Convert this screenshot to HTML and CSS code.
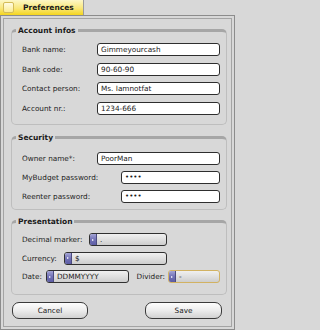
FILE: index.html
```html
<!DOCTYPE html>
<html>
<head>
<meta charset="utf-8">
<title>Preferences</title>
<link rel="stylesheet" href="styles.css">
</head>
<body>
<div class="window">
  <div class="tabbar">
    <div class="tab"><span class="tab-icon"></span><span class="tab-label">Preferences</span></div>
  </div>
  <div class="frame">
    <div class="frame-inner">
      <fieldset class="group group-account">
        <legend>Account infos</legend>
        <div class="rows">
          <div class="row"><span class="label">Bank name:</span><span class="field wide">Gimmeyourcash</span></div>
          <div class="row"><span class="label">Bank code:</span><span class="field wide">90-60-90</span></div>
          <div class="row"><span class="label">Contact person:</span><span class="field wide">Ms. Iamnotfat</span></div>
          <div class="row"><span class="label">Account nr.:</span><span class="field wide">1234-666</span></div>
        </div>
      </fieldset>
      <fieldset class="group group-security">
        <legend>Security</legend>
        <div class="rows">
          <div class="row"><span class="label">Owner name*:</span><span class="field wide">PoorMan</span></div>
          <div class="row"><span class="label">MyBudget password:</span><span class="field short dots">••••</span></div>
          <div class="row"><span class="label">Reenter password:</span><span class="field short dots">••••</span></div>
        </div>
      </fieldset>
      <fieldset class="group group-presentation">
        <legend>Presentation</legend>
        <div class="rows">
          <div class="row narrow"><span class="label">Decimal marker:</span><span class="combo combo-decimal"><span class="combo-btn"></span><span class="combo-text">.</span></span></div>
          <div class="row narrow"><span class="label">Currency:</span><span class="combo combo-currency"><span class="combo-btn"></span><span class="combo-text">$</span></span></div>
          <div class="row date-row">
            <span class="label">Date:</span>
            <span class="combo"><span class="combo-btn"></span><span class="combo-text">DDMMYYYY</span></span>
            <span class="label divider-label">Divider:</span>
            <span class="combo focused"><span class="combo-btn"></span><span class="combo-text">-</span></span>
          </div>
        </div>
      </fieldset>
      <div class="buttons">
        <div class="btn btn-cancel">Cancel</div>
        <div class="btn btn-save">Save</div>
      </div>
    </div>
  </div>
</div>
</body>
</html>
```

FILE: styles.css
```css
* { box-sizing: border-box; }
html, body { margin: 0; padding: 0; }
body {
  width: 238px;
  height: 330px;
  overflow: hidden;
  background: #d8d8d8;
  font-family: "DejaVu Sans", "Liberation Sans", sans-serif;
  font-size: 7.3px;
  color: #1e1e1e;
}

.tabbar { height: 15px; display: flex; }
.tab {
  width: 84px;
  height: 15px;
  display: flex;
  align-items: center;
  gap: 9px;
  padding-left: 3px;
  background: linear-gradient(#fdf7c6, #f9e77a 55%, #f4d51e);
  border-right: 1px solid #9a9a9a;
}
.tab-icon {
  width: 11px;
  height: 11px;
  border: 1px solid #d4bc58;
  border-radius: 2px;
  background: linear-gradient(#fffbe2, #fbec92);
}
.tab-label { font-weight: bold; font-size: 7.5px; line-height: 9px; color: #1a1a1a; }

.frame {
  width: 235px;
  height: 315px;
  border: 1px solid #8c8c8c;
  padding: 2px;
}
.frame-inner {
  height: 100%;
  border: 1px solid #a4a4a4;
  padding: 0 4px 0 7px;
}

.group {
  margin: 0;
  min-width: 0;
  border: 1px solid #bebebe;
  border-top: 3px solid #a6a6a6;
  border-radius: 5px;
  padding: 0 6px 0 4px;
}
.group legend {
  padding: 0 2px;
  font-weight: bold;
  font-size: 7.5px;
  line-height: 9px;
  color: #1a1a1a;
}
.rows { display: flex; flex-direction: column; margin-left: 6px; }
.row {
  display: flex;
  align-items: center;
  justify-content: space-between;
  height: 13px;
}
.label { white-space: nowrap; line-height: 9px; }

.group-account { margin-top: 7px; padding-top: 8px; padding-bottom: 9.5px; }
.group-account .rows { gap: 6.5px; }
.group-security { margin-top: 8px; padding-top: 10px; padding-bottom: 6px; }
.group-security .rows { gap: 6px; }
.group-presentation { margin-top: 7px; padding-top: 7px; padding-bottom: 11px; }
.group-presentation .rows { gap: 5.5px; }

.field {
  height: 13px;
  border: 1px solid #2e2e2e;
  border-radius: 3px;
  background: #ffffff;
  padding: 0 3px;
  line-height: 11px;
  white-space: nowrap;
  color: #1a1a1a;
}
.wide { width: 123px; }
.short { width: 99px; }
.dots { letter-spacing: 0; font-size: 7px; }

.narrow { margin-right: 53px; }
.combo {
  height: 13px;
  border: 1px solid #303030;
  border-radius: 3px;
  display: flex;
  overflow: hidden;
  background: linear-gradient(#f0f0f0, #dcdcdc 60%, #cdcdcd);
}
.combo-decimal { width: 78px; }
.combo-currency { width: 103px; }
.combo.focused { border-color: #d2b262; }
.combo-btn {
  width: 7px;
  flex: none;
  background: linear-gradient(#a4a4d6, #7272b6 50%, #5c5ca4);
  border-right: 1px solid #4c4c80;
  display: flex;
  align-items: center;
  justify-content: center;
}
.combo-btn::after {
  content: "";
  width: 0;
  height: 0;
  border-left: 2px solid #ffffff;
  border-top: 1.5px solid transparent;
  border-bottom: 1.5px solid transparent;
}
.combo-text { padding-left: 3px; line-height: 11px; white-space: nowrap; color: #1a1a1a; }

.date-row {
  display: grid;
  grid-template-columns: 24px 83px 1fr 52px;
  align-items: center;
}
.divider-label { justify-self: end; padding-right: 3px; }

.buttons {
  display: flex;
  justify-content: space-between;
  margin: 7px 5px 0 1px;
}
.btn {
  height: 17px;
  border: 1px solid #3a3a3a;
  border-radius: 7px;
  background: linear-gradient(#fdfdfd, #ececec 50%, #d2d2d2);
  display: flex;
  align-items: center;
  justify-content: center;
  color: #1a1a1a;
}
.btn-cancel { width: 76px; }
.btn-save { width: 77px; }
```
